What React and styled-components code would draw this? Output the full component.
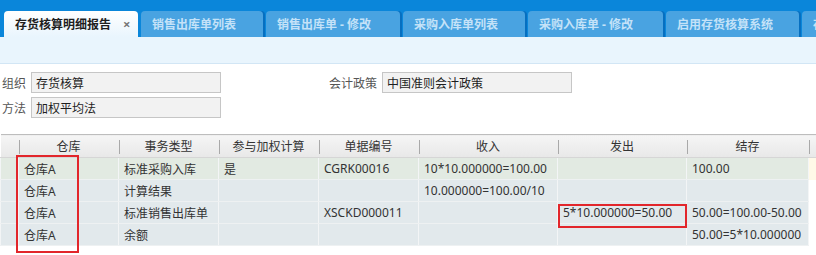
import React from "react";
import styled, { createGlobalStyle, css } from "styled-components";

const GlobalStyle = createGlobalStyle`
  html, body { margin: 0; padding: 0; background: #fff; overflow: hidden; }
  body {
    font-family: "Noto Sans", "Noto Sans CJK SC", sans-serif;
    font-size: 12px;
    color: #333;
  }
`;

const Page = styled.div`
  position: relative;
  width: 816px;
  height: 255px;
  overflow: hidden;
`;

const TabBar = styled.div`
  height: 37px;
  background: #0a86da;
  display: flex;
  align-items: flex-end;
  padding-left: 4px;
  gap: 3px;
  box-sizing: border-box;
`;

const Tab = styled.div`
  flex: 0 0 auto;
  width: ${(p) => p.$w}px;
  height: 26px;
  box-sizing: border-box;
  border-radius: 4px 4px 0 0;
  padding-left: 11px;
  display: flex;
  align-items: center;
  gap: 12px;
  font-weight: bold;
  font-size: 12px;
  white-space: nowrap;
  overflow: hidden;
  box-shadow: 2px 0 0 #066fc0;
  ${(p) =>
    p.$active
      ? css`
          background: linear-gradient(#ffffff, #e9f5fd);
          color: #1e1e1e;
          box-shadow: none;
        `
      : css`
          background: #49a3e1;
          color: #c4e2f8;
        `}
`;

const Close = styled.span`
  color: #777;
  font-size: 13px;
  font-weight: bold;
`;

const SubStrip = styled.div`
  height: 26px;
  background: #e9f5fd;
  border-bottom: 1px solid #d2e6f5;
`;

const Form = styled.div`
  padding: 8px 0 0 2px;
  display: flex;
  flex-direction: column;
  gap: 4px;
`;

const FormRow = styled.div`
  display: flex;
  align-items: center;
  height: 21px;
`;

const Field = styled.div`
  display: flex;
  align-items: center;
  margin-left: ${(p) => p.$offset || 0}px;
`;

const Label = styled.span`
  color: #555;
  margin-right: 5px;
  white-space: nowrap;
`;

const Input = styled.div`
  width: 190px;
  height: 21px;
  box-sizing: border-box;
  border: 1px solid #c6c6c6;
  background: #f2f2f2;
  color: #1e1e1e;
  padding-left: 4px;
  display: flex;
  align-items: center;
  font-size: 12px;
`;

const Table = styled.table`
  margin-top: 16px;
  border-collapse: collapse;
  table-layout: fixed;
  width: 816px;
`;

const HeadCell = styled.th`
  height: 22px;
  padding: 0;
  font-weight: normal;
  color: #333;
  text-align: center;
  background: linear-gradient(#f5f5f5, #e8e8e8);
  border-top: 1px solid #bdbdbd;
  border-bottom: 1px solid #d6d6d6;
  position: relative;
  ${(p) =>
    p.$sep &&
    css`
      &::before {
        content: "";
        position: absolute;
        left: 0;
        top: 5px;
        bottom: 3px;
        width: 1px;
        background: #a9a9a9;
      }
    `}
`;

const Row = styled.tr`
  height: 22px;
`;

const Cell = styled.td`
  padding: 0 0 0 5px;
  height: 21px;
  white-space: nowrap;
  overflow: hidden;
  color: #333;
  background: ${(p) => (p.$first ? "#e2eae2" : "#e2e9ec")};
  border-bottom: 1px solid #eef1f2;
  border-left: 1px solid #f3f5f6;
`;

const EdgeCell = styled.td`
  padding: 0;
  background: ${(p) => (p.$first ? "#fff9e8" : "#ffffff")};
  border-left: 1px solid #f3f5f6;
`;

const Mark = styled.div`
  position: absolute;
  border: 2px solid #e2262b;
  box-sizing: border-box;
  pointer-events: none;
`;

const tabs = [
  { label: "存货核算明细报告", w: 134, active: true },
  { label: "销售出库单列表", w: 122 },
  { label: "销售出库单 - 修改", w: 134 },
  { label: "采购入库单列表", w: 122 },
  { label: "采购入库单 - 修改", w: 135 },
  { label: "启用存货核算系统", w: 133 },
  { label: "存", w: 20 },
];

const cols = [18, 100, 100, 100, 100, 139, 129, 122, 8];
const heads = ["", "仓库", "事务类型", "参与加权计算", "单据编号", "收入", "发出", "结存", ""];

const rows = [
  ["仓库A", "标准采购入库", "是", "CGRK00016", "10*10.000000=100.00", "", "100.00"],
  ["仓库A", "计算结果", "", "", "10.000000=100.00/10", "", ""],
  ["仓库A", "标准销售出库单", "", "XSCKD000011", "", "5*10.000000=50.00", "50.00=100.00-50.00"],
  ["仓库A", "余额", "", "", "", "", "50.00=5*10.000000"],
];

export default function App() {
  return (
    <Page>
      <GlobalStyle />
      <TabBar>
        {tabs.map((t) => (
          <Tab key={t.label} $w={t.w} $active={t.active}>
            {t.label}
            {t.active && <Close>×</Close>}
          </Tab>
        ))}
      </TabBar>
      <SubStrip />
      <Form>
        <FormRow>
          <Field>
            <Label>组织</Label>
            <Input>存货核算</Input>
          </Field>
          <Field $offset={108}>
            <Label>会计政策</Label>
            <Input>中国准则会计政策</Input>
          </Field>
        </FormRow>
        <FormRow>
          <Field>
            <Label>方法</Label>
            <Input>加权平均法</Input>
          </Field>
        </FormRow>
      </Form>
      <Table>
        <colgroup>
          {cols.map((w, i) => (
            <col key={i} style={{ width: w }} />
          ))}
        </colgroup>
        <thead>
          <tr>
            {heads.map((h, i) => (
              <HeadCell key={i} $sep={i > 0}>
                {h}
              </HeadCell>
            ))}
          </tr>
        </thead>
        <tbody>
          {rows.map((r, ri) => (
            <Row key={ri}>
              <Cell $first={ri === 0} />
              {r.map((c, ci) => (
                <Cell key={ci} $first={ri === 0}>
                  {c}
                </Cell>
              ))}
              <EdgeCell $first={ri === 0} />
            </Row>
          ))}
        </tbody>
      </Table>
      <Mark style={{ left: 16, top: 155, width: 63, height: 98 }} />
      <Mark style={{ left: 558, top: 204, width: 129, height: 24 }} />
    </Page>
  );
}
